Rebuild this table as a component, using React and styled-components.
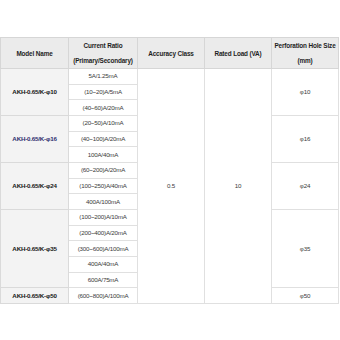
import React from 'react';
import styled, { createGlobalStyle } from 'styled-components';

const GlobalStyle = createGlobalStyle`
  html, body {
    margin: 0;
    padding: 0;
    background: #fff;
  }
  body {
    font-family: "Liberation Sans", Arial, sans-serif;
  }
`;

const Page = styled.div`
  width: 340px;
  height: 340px;
  padding-top: 37px;
  box-sizing: border-box;
  overflow: hidden;
`;

const Table = styled.table`
  width: 338px;
  table-layout: fixed;
  border-collapse: collapse;
  font-size: 6px;
  letter-spacing: -0.2px;
`;

const HeadRow = styled.tr`
  height: 30px;
`;

const Row = styled.tr`
  height: 15.67px;
`;

const Th = styled.th`
  background: #ebebeb;
  border: 1px solid #d6d6d6;
  color: #1e1e1e;
  font-size: 6.4px;
  font-weight: bold;
  letter-spacing: -0.15px;
  line-height: 15px;
  padding: 0 1px;
  text-align: center;
  vertical-align: middle;
`;

const Model = styled.td`
  background: #f3f3f3;
  border: 1px solid #dadada;
  color: ${p => p.$accent ? '#2e2e6e' : '#151515'};
  font-size: 6.2px;
  font-weight: bold;
  text-align: center;
  vertical-align: middle;
  padding: 0;
`;

const Td = styled.td`
  background: #fff;
  border: 1px solid #e0e0e0;
  color: #3a3a3a;
  font-size: 6.2px;
  text-align: center;
  vertical-align: middle;
  padding: 0;
  line-height: 14px;
`;

const groups = [
  { model: 'AKH-0.65/K-φ10', hole: 'φ10', ratios: ['5A/1.25mA', '(10~20)A/5mA', '(40~60)A/20mA'] },
  { model: 'AKH-0.65/K-φ16', hole: 'φ16', accent: true, ratios: ['(20~50)A/10mA', '(40~100)A/20mA', '100A/40mA'] },
  { model: 'AKH-0.65/K-φ24', hole: 'φ24', ratios: ['(60~200)A/20mA', '(100~250)A/40mA', '400A/100mA'] },
  { model: 'AKH-0.65/K-φ35', hole: 'φ35', ratios: ['(100~200)A/10mA', '(200~400)A/20mA', '(300~600)A/100mA', '400A/40mA', '600A/75mA'] },
  { model: 'AKH-0.65/K-φ50', hole: 'φ50', ratios: ['(600~800)A/100mA'] },
];

const totalRows = groups.reduce((n, g) => n + g.ratios.length, 0);

export default function App() {
  return (
    <Page>
      <GlobalStyle />
      <Table>
        <colgroup>
          <col style={{ width: 68 }} />
          <col style={{ width: 69 }} />
          <col style={{ width: 67 }} />
          <col style={{ width: 67 }} />
          <col style={{ width: 67 }} />
        </colgroup>
        <thead>
          <HeadRow>
            <Th>Model Name</Th>
            <Th>Current Ratio<br />(Primary/Secondary)</Th>
            <Th>Accuracy Class</Th>
            <Th>Rated Load (VA)</Th>
            <Th>Perforation Hole Size<br />(mm)</Th>
          </HeadRow>
        </thead>
        <tbody>
          {groups.map((g, gi) =>
            g.ratios.map((r, ri) => (
              <Row key={g.model + ri}>
                {ri === 0 && <Model rowSpan={g.ratios.length} $accent={g.accent}>{g.model}</Model>}
                <Td>{r}</Td>
                {gi === 0 && ri === 0 && <Td rowSpan={totalRows}>0.5</Td>}
                {gi === 0 && ri === 0 && <Td rowSpan={totalRows}>10</Td>}
                {ri === 0 && <Td rowSpan={g.ratios.length}>{g.hole}</Td>}
              </Row>
            ))
          )}
        </tbody>
      </Table>
    </Page>
  );
}
